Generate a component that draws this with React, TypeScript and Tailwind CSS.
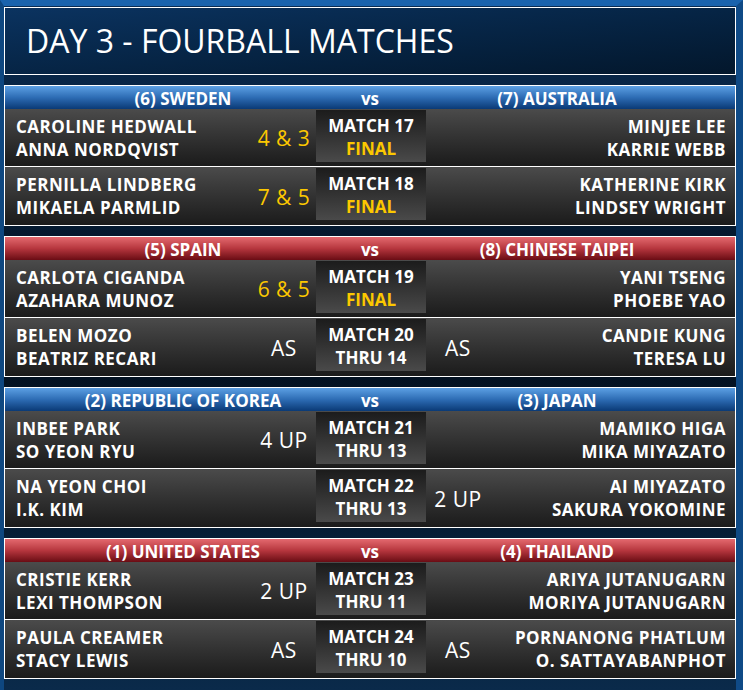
import React from 'react';

type Match = {
  no: number;
  status: string;
  final?: boolean;
  left: [string, string];
  right: [string, string];
  leftScore?: string;
  rightScore?: string;
};

type Section = {
  color: 'blue' | 'red';
  home: string;
  away: string;
  matches: Match[];
};

const sections: Section[] = [
  {
    color: 'blue',
    home: '(6) SWEDEN',
    away: '(7) AUSTRALIA',
    matches: [
      { no: 17, status: 'FINAL', final: true, left: ['CAROLINE HEDWALL', 'ANNA NORDQVIST'], right: ['MINJEE LEE', 'KARRIE WEBB'], leftScore: '4 & 3' },
      { no: 18, status: 'FINAL', final: true, left: ['PERNILLA LINDBERG', 'MIKAELA PARMLID'], right: ['KATHERINE KIRK', 'LINDSEY WRIGHT'], leftScore: '7 & 5' },
    ],
  },
  {
    color: 'red',
    home: '(5) SPAIN',
    away: '(8) CHINESE TAIPEI',
    matches: [
      { no: 19, status: 'FINAL', final: true, left: ['CARLOTA CIGANDA', 'AZAHARA MUNOZ'], right: ['YANI TSENG', 'PHOEBE YAO'], leftScore: '6 & 5' },
      { no: 20, status: 'THRU 14', left: ['BELEN MOZO', 'BEATRIZ RECARI'], right: ['CANDIE KUNG', 'TERESA LU'], leftScore: 'AS', rightScore: 'AS' },
    ],
  },
  {
    color: 'blue',
    home: '(2) REPUBLIC OF KOREA',
    away: '(3) JAPAN',
    matches: [
      { no: 21, status: 'THRU 13', left: ['INBEE PARK', 'SO YEON RYU'], right: ['MAMIKO HIGA', 'MIKA MIYAZATO'], leftScore: '4 UP' },
      { no: 22, status: 'THRU 13', left: ['NA YEON CHOI', 'I.K. KIM'], right: ['AI MIYAZATO', 'SAKURA YOKOMINE'], rightScore: '2 UP' },
    ],
  },
  {
    color: 'red',
    home: '(1) UNITED STATES',
    away: '(4) THAILAND',
    matches: [
      { no: 23, status: 'THRU 11', left: ['CRISTIE KERR', 'LEXI THOMPSON'], right: ['ARIYA JUTANUGARN', 'MORIYA JUTANUGARN'], leftScore: '2 UP' },
      { no: 24, status: 'THRU 10', left: ['PAULA CREAMER', 'STACY LEWIS'], right: ['PORNANONG PHATLUM', 'O. SATTAYABANPHOT'], leftScore: 'AS', rightScore: 'AS' },
    ],
  },
];

const MatchRow: React.FC<{ m: Match; last: boolean }> = ({ m, last }) => {
  const scoreColor = m.final ? 'text-[#fcc800]' : 'text-white';
  return (
    <div
      className={`flex h-[58px] bg-gradient-to-b from-[#4b4b4b] to-[#1b1b1b] ${last ? '' : 'border-b border-white'}`}
    >
      <div className="flex-1 flex flex-col justify-center pl-[11px] text-[17px] leading-[23px] font-bold tracking-[0.5px] text-white whitespace-nowrap">
        <div>{m.left[0]}</div>
        <div>{m.left[1]}</div>
      </div>
      <div className={`w-[64px] pt-[3px] flex items-center justify-center text-[21px] font-medium tracking-[0.5px] ${scoreColor}`}>
        {m.leftScore}
      </div>
      <div className="w-[110px] h-[52px] mt-px flex flex-col justify-center items-center pt-[2px] bg-gradient-to-b from-[#1c1c1c] to-[#4a4a4a] text-[17px] leading-[23px] font-bold whitespace-nowrap">
        <div className="text-white">MATCH {m.no}</div>
        <div className={m.final ? 'text-[#fcc800]' : 'text-white'}>{m.status}</div>
      </div>
      <div className="w-[64px] pt-[3px] flex items-center justify-center text-[21px] font-medium tracking-[0.5px] text-white">
        {m.rightScore}
      </div>
      <div className="flex-1 flex flex-col justify-center items-end pr-[9px] text-[17px] leading-[23px] font-bold tracking-[0.5px] text-white whitespace-nowrap">
        <div>{m.right[0]}</div>
        <div>{m.right[1]}</div>
      </div>
    </div>
  );
};

const SectionBlock: React.FC<{ s: Section }> = ({ s }) => {
  const head =
    s.color === 'blue'
      ? 'bg-gradient-to-b from-[#5ca0e4] via-[#2d6cb4] to-[#0a3a76]'
      : 'bg-gradient-to-b from-[#e4696f] via-[#b6363e] to-[#6a0c14]';
  return (
    <div className="border border-white">
      <div className={`h-[23px] grid grid-cols-[1fr_auto_1fr] items-center text-[17px] font-bold text-white ${head}`}>
        <div className="text-center">{s.home}</div>
        <div className="text-center">vs</div>
        <div className="text-center">{s.away}</div>
      </div>
      {s.matches.map((m, i) => (
        <MatchRow key={m.no} m={m} last={i === s.matches.length - 1} />
      ))}
    </div>
  );
};

export default function App() {
  return (
    <div
      className="w-[743px] h-[690px] overflow-hidden border-t-[6px] border-t-[#1a63ad] border-l-4 border-l-[#0e4780] border-r-[7px] border-r-[#0f4a86] bg-gradient-to-b from-[#0a2c52] via-[#03101f] to-[#0a2a4a]"
      style={{ fontFamily: '"Open Sans", "Noto Sans", sans-serif' }}
    >
      <div className="pt-px flex flex-col gap-[10px]">
        <div className="h-[68px] border border-white bg-gradient-to-br from-[#0b3360] to-[#03172c] flex items-center pl-[21px]">
          <h1 className="text-[32px] text-white leading-none">DAY 3 - FOURBALL MATCHES</h1>
        </div>
        {sections.map((s) => (
          <SectionBlock key={s.home} s={s} />
        ))}
      </div>
    </div>
  );
}
